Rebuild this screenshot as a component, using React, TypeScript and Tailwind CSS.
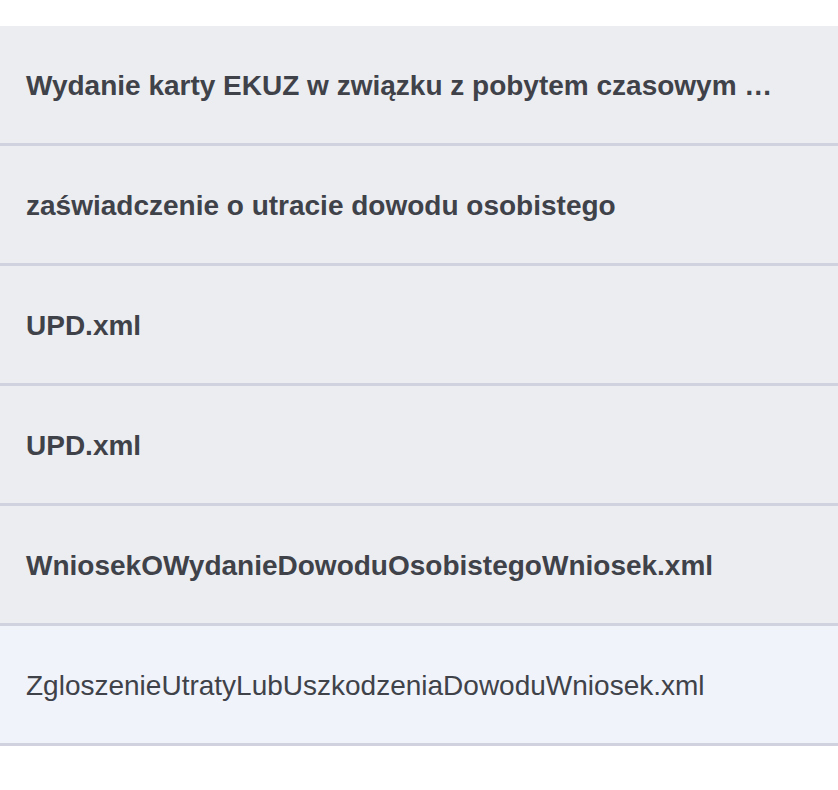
const items = [
  { title: "Wydanie karty EKUZ w związku z pobytem czasowym …", bold: true },
  { title: "zaświadczenie o utracie dowodu osobistego", bold: true },
  { title: "UPD.xml", bold: true },
  { title: "UPD.xml", bold: true },
  { title: "WniosekOWydanieDowoduOsobistegoWniosek.xml", bold: true },
  { title: "ZgloszenieUtratyLubUszkodzeniaDowoduWniosek.xml", bold: false },
];

export default function App() {
  return (
    <div className="min-h-[790px] w-[838px] bg-white pt-[26px] font-['Liberation_Sans',Arial,sans-serif]">
      <ul>
        {items.map((item, i) => (
          <li
            key={i}
            className={
              item.bold
                ? "h-[120px] flex items-center pl-[26px] pr-[40px] pt-[2px] border-b-[3px] border-[#d0d2df] bg-[#ecedf1]"
                : "h-[120px] flex items-center pl-[26px] pr-[40px] pt-[2px] border-b-[3px] border-[#d0d2df] bg-[#f0f3fa]"
            }
          >
            <span
              className={
                item.bold
                  ? "block whitespace-nowrap text-[28px] font-bold text-[#404249]"
                  : "block whitespace-nowrap text-[28px] text-[#404249]"
              }
            >
              {item.title}
            </span>
          </li>
        ))}
      </ul>
    </div>
  );
}
